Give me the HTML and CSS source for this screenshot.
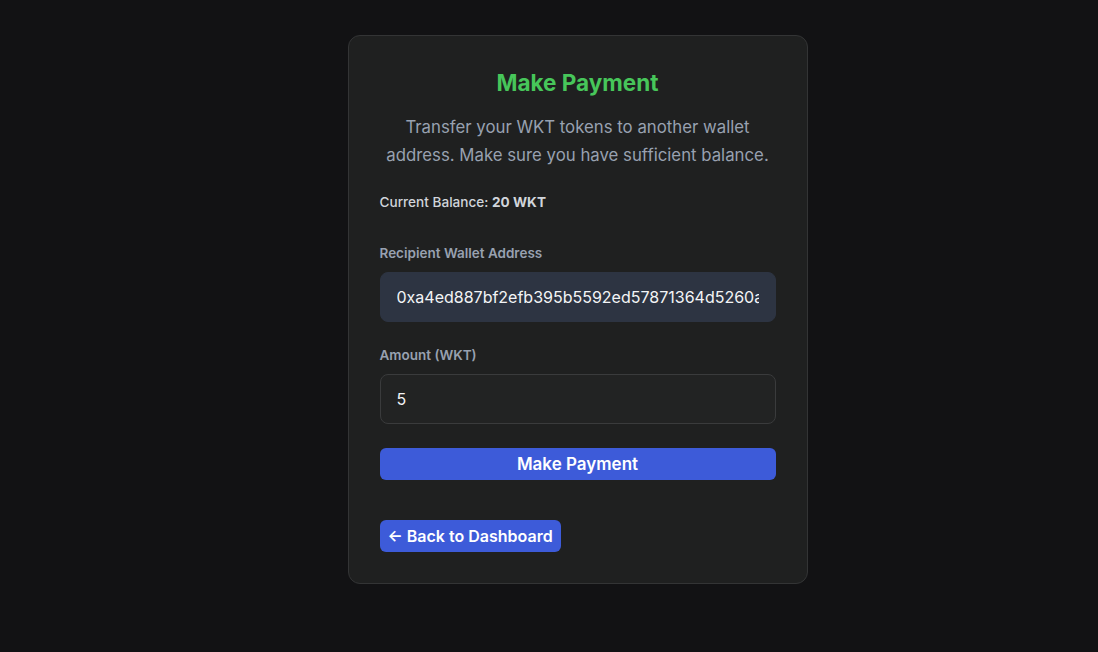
FILE: index.html
```html
<!DOCTYPE html>
<html lang="en">
<head>
<meta charset="utf-8">
<title>Make Payment</title>
<link rel="stylesheet" href="styles.css">
</head>
<body>
<main class="page">
  <section class="card">
    <h1 class="title">Make Payment</h1>
    <p class="desc">Transfer your WKT tokens to another wallet address. Make sure you have sufficient balance.</p>
    <p class="balance">Current Balance: <strong>20 WKT</strong></p>
    <form class="form">
      <div class="field">
        <label class="label" for="addr">Recipient Wallet Address</label>
        <input id="addr" class="input input-filled" type="text" value="0xa4ed887bf2efb395b5592ed57871364d5260a7f2">
      </div>
      <div class="field">
        <label class="label" for="amt">Amount (WKT)</label>
        <input id="amt" class="input" type="text" value="5">
      </div>
      <button type="button" class="btn-primary">Make Payment</button>
    </form>
    <div class="back-row">
      <a class="btn-back" href="#">&larr; Back to Dashboard</a>
    </div>
  </section>
</main>
</body>
</html>
```
FILE: styles.css
```css
* { box-sizing: border-box; }
html, body { margin: 0; padding: 0; }
body {
  background: #121214;
  font-family: Inter, "Noto Sans", sans-serif;
  color: #e5e7eb;
  min-height: 652px;
}
.page {
  display: flex;
  justify-content: center;
  padding-top: 35px;
  padding-left: 57px;
}
.card {
  width: 460px;
  background: #1f2020;
  border: 1px solid #333435;
  border-radius: 12px;
  padding: 31px;
}
.title {
  margin: 0;
  text-align: center;
  font-size: 22.5px;
  line-height: 32px;
  font-weight: 700;
  color: #47c65a;
}
.desc {
  margin: 14px 0 0;
  text-align: center;
  font-size: 16.8px;
  line-height: 28px;
  color: #98a1b0;
}
.balance {
  margin: 23px 0 0;
  font-size: 13.6px;
  line-height: 20px;
  font-weight: 500;
  color: #d1d5db;
}
.balance strong { font-weight: 700; }
.form {
  margin-top: 31px;
  display: flex;
  flex-direction: column;
  gap: 23px;
}
.field { display: flex; flex-direction: column; }
.label {
  font-size: 13.5px;
  line-height: 20px;
  font-weight: 600;
  color: #98a1b0;
  margin-bottom: 9px;
}
.input {
  height: 50px;
  width: 100%;
  border-radius: 8px;
  border: 1px solid #3a3b3c;
  background: #222323;
  color: #f3f4f6;
  font-family: inherit;
  font-size: 16px;
  padding: 0 16px;
  outline: none;
}
.input-filled {
  background: #2d3442;
  border-color: #2d3442;
}
.btn-primary {
  height: 32px;
  margin-top: 1px;
  border: 0;
  border-radius: 6px;
  background: #3d5bd9;
  color: #ffffff;
  font-family: inherit;
  font-size: 17px;
  font-weight: 600;
  cursor: pointer;
}
.back-row { margin-top: 40px; display: flex; }
.btn-back {
  display: inline-flex;
  align-items: center;
  height: 32px;
  padding: 0 8px;
  border-radius: 6px;
  background: #3d5bd9;
  color: #ffffff;
  font-size: 16px;
  font-weight: 600;
  text-decoration: none;
}
```
